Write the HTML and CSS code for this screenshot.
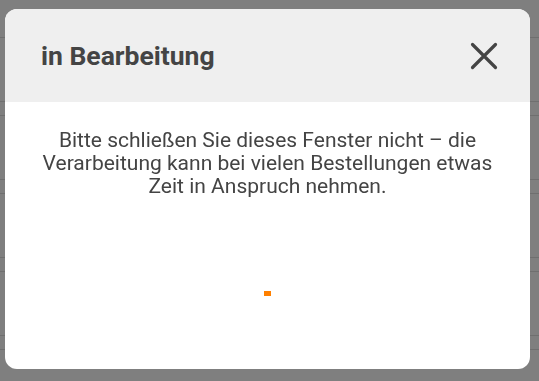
FILE: index.html
```html
<!DOCTYPE html>
<html lang="de">
<head>
<meta charset="utf-8">
<title>in Bearbeitung</title>
<link rel="stylesheet" href="styles.css">
</head>
<body>
<div class="page">
  <div class="thead"></div>
  <div class="row"></div><div class="gap"></div>
  <div class="row"></div><div class="gap"></div>
  <div class="row"></div><div class="gap"></div>
  <div class="row"></div><div class="gap"></div>
</div>
<div class="overlay"></div>
<div class="modal">
  <div class="modal-header">
    <h2 class="modal-title">in Bearbeitung</h2>
    <button class="close" aria-label="Schließen">
      <svg width="28" height="28" viewBox="0 0 28 28"><path d="M2.5 2.5 25.5 25.5M25.5 2.5 2.5 25.5" stroke="#444" stroke-width="3.2" stroke-linecap="round" fill="none"/></svg>
    </button>
  </div>
  <div class="modal-body">
    <p class="message">Bitte schließen Sie dieses Fenster nicht – die Verarbeitung kann bei vielen Bestellungen etwas Zeit in Anspruch nehmen.</p>
    <div class="spinner"></div>
  </div>
</div>
</body>
</html>
```
FILE: styles.css
```css
html, body {
  margin: 0;
  padding: 0;
  background: #fff;
  font-family: Roboto, "Liberation Sans", sans-serif;
}
.page {
  width: 539px;
  height: 381px;
  overflow: hidden;
}
.thead {
  height: 37px;
  border-bottom: 1px solid #dedede;
}
.row {
  height: 63px;
  border-bottom: 1px solid #dedede;
}
.gap {
  height: 13px;
  border-bottom: 1px solid #dedede;
}
.overlay {
  position: fixed;
  inset: 0;
  background: rgba(0, 0, 0, 0.5);
}
.modal {
  position: absolute;
  left: 5px;
  top: 9px;
  width: 525px;
  height: 360px;
  background: #fff;
  border-radius: 12px;
  overflow: hidden;
  display: flex;
  flex-direction: column;
}
.modal-header {
  height: 93px;
  background: #efefef;
  display: flex;
  align-items: center;
  justify-content: space-between;
  padding: 0 32px 0 36px;
  flex-shrink: 0;
}
.modal-title {
  margin: 0;
  font-size: 26.5px;
  font-weight: 700;
  color: #444;
}
.close {
  border: 0;
  background: none;
  padding: 0;
  width: 28px;
  height: 28px;
  display: flex;
}
.modal-body {
  padding: 27px 30px 0;
  display: flex;
  flex-direction: column;
  align-items: center;
}
.message {
  margin: 0;
  font-size: 21px;
  line-height: 23px;
  color: #444;
  text-align: center;
}
.spinner {
  margin-top: 93px;
  width: 7px;
  height: 5px;
  background: #ff8000;
}
```
